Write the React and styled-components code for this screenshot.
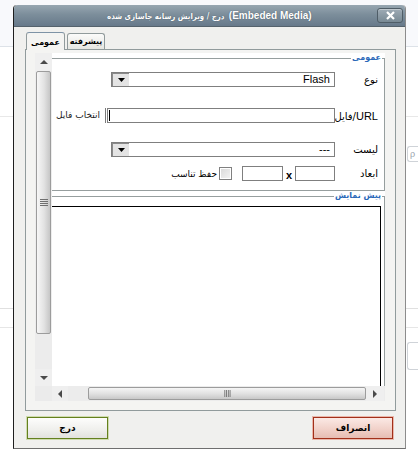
import React from 'react';
import styled, { createGlobalStyle } from 'styled-components';

const GlobalStyle = createGlobalStyle`
  html, body {
    margin: 0;
    padding: 0;
    background: #fff;
  }
  body {
    font-family: "Liberation Sans", "DejaVu Sans", sans-serif;
    font-size: 11px;
    color: #000;
  }
  * { box-sizing: border-box; }
`;

const Page = styled.div`
  position: relative;
  width: 418px;
  height: 459px;
  overflow: hidden;
  background: #fff;
`;

// the page behind the modal, only its edges show
const BackBand = styled.div`
  height: ${p => p.$h}px;
  margin-top: ${p => p.$mt || 0}px;
  display: flex;
  justify-content: flex-end;
  align-items: stretch;
  background: ${p => p.$bg || 'transparent'};
  border-bottom: ${p => (p.$line ? `1px solid ${p.$line}` : 'none')};
`;

const SideStub = styled.div`
  width: 11px;
  border: 1px solid #cfd3d8;
  border-right: none;
  border-radius: 3px 0 0 3px;
  background: #fff;
  color: #9aa3ad;
  font-size: 9px;
  line-height: 14px;
  padding-left: 2px;
  overflow: hidden;
`;

const Dialog = styled.div`
  position: absolute;
  left: 13px;
  top: 5px;
  width: 393px;
  height: 444px;
  display: flex;
  flex-direction: column;
  background: #f0f0ee;
  border-left: 1px solid #1e1e1e;
  border-right: 1px solid #8c8c8c;
  border-bottom: 1px solid #6f6f6f;
  border-radius: 4px 4px 0 0;
`;

const TitleBar = styled.div`
  height: 22px;
  display: grid;
  grid-template-columns: 1fr auto 1fr;
  align-items: start;
  background: linear-gradient(#97a6b1, #7c8e9b 45%, #67798a);
  border-radius: 4px 4px 0 0;
  border-bottom: 1px solid #55626c;
`;

const TitleText = styled.div`
  grid-column: 2;
  direction: ltr;
  display: flex;
  align-items: baseline;
  gap: 4px;
  height: 22px;
  padding-top: 5px;
  color: #fff;
  white-space: nowrap;
  text-shadow: 0 0 1px #3f4d58;
`;

const TitleFa = styled.span`
  font-family: "DejaVu Sans", sans-serif;
  font-size: 8px;
  font-weight: bold;
  letter-spacing: 0;
  transform: scaleX(0.88);
  transform-origin: right center;
  display: inline-block;
  margin-left: -16px;
`;

const TitleEn = styled.span`
  font-family: "Liberation Sans", sans-serif;
  font-size: 10px;
  font-weight: bold;
`;

const CloseButton = styled.div`
  grid-column: 3;
  justify-self: end;
  margin: 3px 2px 0 0;
  width: 26px;
  height: 15px;
  display: flex;
  align-items: center;
  justify-content: center;
  border: 1px solid #4f5d67;
  border-radius: 3px;
  background: linear-gradient(#9eabb5, #788994);
  box-shadow: inset 0 1px 0 rgba(255, 255, 255, 0.35);
`;

const Body = styled.div`
  flex: 1;
  display: flex;
  flex-direction: column;
  padding: 5px 9px 0 11px;
`;

const TabRow = styled.div`
  display: flex;
  gap: 2px;
  height: 17px;
  padding-left: 1px;
`;

const Tab = styled.div`
  position: relative;
  z-index: 1;
  width: ${p => p.$w}px;
  height: ${p => (p.$active ? 18 : 16)}px;
  margin-top: ${p => (p.$active ? 0 : 1)}px;
  border: 1px solid #919b9c;
  border-bottom: none;
  border-top-color: ${p => (p.$active ? '#7e93a6' : '#919b9c')};
  border-radius: 3px 3px 0 0;
  background: ${p => (p.$active ? '#f4f4f2' : 'linear-gradient(#fbfbfa, #e6e6e1)')};
  display: flex;
  align-items: center;
  justify-content: center;
  font-family: "DejaVu Sans", sans-serif;
  font-size: 8px;
  font-weight: bold;
  white-space: nowrap;
  padding-top: ${p => (p.$active ? 2 : 0)}px;
`;

const Panel = styled.div`
  width: 371px;
  height: 362px;
  border: 1px solid #919b9c;
  background: #f4f4f2;
  padding: 3px 0 0 9px;
`;

const ScrollFrame = styled.div`
  display: grid;
  grid-template-columns: 17px 333px;
  grid-template-rows: 333px 15px;
`;

const VScroll = styled.div`
  display: flex;
  flex-direction: column;
  background: #ededed;
`;

const Arrow = styled.div`
  width: ${p => p.$w || 17}px;
  height: ${p => p.$h || 15}px;
  flex: none;
  display: flex;
  align-items: center;
  justify-content: center;
  background: #efefef;
`;

const VThumb = styled.div`
  height: 263px;
  margin: 0 1px;
  flex: none;
  display: flex;
  align-items: center;
  justify-content: center;
  border: 1px solid #9c9c9c;
  border-radius: 2px;
  background: linear-gradient(to right, #f7f7f7, #e2e2e2 55%, #c6c6c6);
`;

const Track = styled.div`
  flex: ${p => (p.$w ? 'none' : 1)};
  width: ${p => (p.$w ? `${p.$w}px` : 'auto')};
  background: #ececec;
`;

const Corner = styled.div`
  background: #ebebeb;
`;

const HScroll = styled.div`
  display: flex;
  background: #ececec;
`;

const HThumb = styled.div`
  flex: 1;
  margin: 1px 0;
  display: flex;
  align-items: center;
  justify-content: center;
  border: 1px solid #9c9c9c;
  border-radius: 2px;
  background: linear-gradient(#f5f5f5, #e0e0e0 55%, #c8c8c8);
`;

const Viewport = styled.div`
  overflow: hidden;
  background: #fff;
  direction: rtl;
`;

const Content = styled.div`
  width: 430px;
`;

const FieldBox = styled.div`
  position: relative;
  margin-top: 5px;
  padding: 0 ${p => p.$pr || 0}px ${p => p.$pb || 0}px 0;
  border: 1px solid #969e9e;
  height: ${p => (p.$h ? `${p.$h}px` : 'auto')};
`;

const Legend = styled.span`
  position: absolute;
  top: -6px;
  right: 2px;
  padding: 0 1px;
  background: #fff;
  font-family: "DejaVu Sans", sans-serif;
  font-size: 8px;
  font-weight: bold;
  line-height: 10px;
  color: #2a68b8;
  white-space: nowrap;
`;

const Row = styled.div`
  display: flex;
  align-items: center;
  height: 15px;
  margin-top: ${p => p.$mt}px;
`;

const Label = styled.div`
  width: 49px;
  flex: none;
  padding-right: 6px;
  font-family: "DejaVu Sans", sans-serif;
  font-size: 10px;
  white-space: nowrap;
`;

const Ltr = styled.span`
  direction: ltr;
  unicode-bidi: isolate;
  display: inline-block;
`;

const LatinPart = styled.span`
  font-family: "Liberation Sans", sans-serif;
  font-size: 11px;
`;

const Select = styled.div`
  width: 224px;
  height: 15px;
  display: flex;
  border: 1px solid #7f7f7f;
  background: #fff;
`;

const SelectValue = styled.div`
  flex: 1;
  padding-right: 4px;
  font-size: 11px;
  line-height: 13px;
  direction: ltr;
  text-align: right;
`;

const DropButton = styled.div`
  width: 17px;
  flex: none;
  display: flex;
  align-items: center;
  justify-content: center;
  border: 1px solid #8a8a8a;
  border-width: 1px 0 0 1px;
  background: #e4e4e4;
`;

const TextInput = styled.div`
  width: ${p => p.$w}px;
  height: 15px;
  flex: none;
  border: 1px solid #7f7f7f;
  background: #fff;
  direction: ltr;
  display: flex;
  align-items: center;
`;

const Caret = styled.span`
  width: 1px;
  height: 11px;
  margin-left: 1px;
  background: #000;
`;

const BrowseButton = styled.div`
  width: 70px;
  height: 15px;
  flex: none;
  margin-right: 1px;
  padding-right: 5px;
  border-right: 1px solid #7a7a7a;
  font-family: "DejaVu Sans", sans-serif;
  font-size: 9px;
  line-height: 15px;
  white-space: nowrap;
  color: #1c1c1c;
`;

const Times = styled.div`
  width: 12px;
  flex: none;
  text-align: center;
  font-size: 11px;
  font-weight: bold;
  padding-top: 2px;
`;

const Checkbox = styled.div`
  width: 13px;
  height: 13px;
  flex: none;
  margin-right: 10px;
  border: 1px solid #808080;
  background: linear-gradient(135deg, #d8d8d8, #f4f4f4);
  box-shadow: inset 0 0 0 1px #fff;
`;

const CheckLabel = styled.div`
  margin-right: 2px;
  font-family: "DejaVu Sans", sans-serif;
  font-size: 9px;
  white-space: nowrap;
`;

const PreviewBox = styled.div`
  margin-top: 9px;
  height: 190px;
  border: 1px solid #000;
  background: #fff;
`;

const ButtonRow = styled.div`
  display: flex;
  justify-content: space-between;
  margin-top: 6px;
  padding: 0 3px 0 2px;
`;

const ActionButton = styled.div`
  width: ${p => p.$w}px;
  height: 22px;
  display: flex;
  align-items: center;
  justify-content: center;
  border: 1px solid ${p => (p.$tone === 'red' ? '#a2301a' : '#64801e')};
  box-shadow: 0 0 0 1px ${p => (p.$tone === 'red' ? '#e9b7ab' : '#cfdcae')};
  background: ${p =>
    p.$tone === 'red'
      ? 'linear-gradient(#fbe9e5, #f0cfc7 60%, #e6bdb3)'
      : 'linear-gradient(#fdfdfc, #efefec 60%, #e2e2dd)'};
  font-family: "DejaVu Sans", sans-serif;
  font-size: 9px;
  font-weight: bold;
  direction: rtl;
`;

const Tri = ({ dir }) => {
  const pts = {
    up: '0,5 4,1 8,5',
    down: '0,1 8,1 4,5',
    left: '5,0 5,8 1,4',
    right: '1,0 1,8 5,4',
  }[dir];
  const vertical = dir === 'up' || dir === 'down';
  return (
    <svg width={vertical ? 8 : 6} height={vertical ? 6 : 8} viewBox={vertical ? '0 0 8 6' : '0 0 6 8'}>
      <polygon points={pts} fill="#4a4a4a" />
    </svg>
  );
};

const Grip = ({ vertical }) => (
  <svg width="8" height={vertical ? 8 : 7} viewBox="0 0 8 8">
    {[0, 1, 2, 3].map(i =>
      vertical ? (
        <rect key={i} x="0" y={i * 2} width="8" height="1" fill="#6f6f6f" />
      ) : (
        <rect key={i} x={i * 2 + 1} y="0" width="1" height="8" fill="#6f6f6f" />
      )
    )}
  </svg>
);

const Select1 = ({ value }) => (
  <Select>
    <SelectValue>{value}</SelectValue>
    <DropButton>
      <svg width="7" height="4" viewBox="0 0 7 4">
        <polygon points="0,0 7,0 3.5,4" fill="#000" />
      </svg>
    </DropButton>
  </Select>
);

export default function App() {
  return (
    <Page>
      <GlobalStyle />
      <BackBand $h={47} $bg="#f8f9fc" $line="#dde2e8" />
      <BackBand $h={70} $line="#e8e8e8" />
      <BackBand $h={16} $mt={29}>
        <SideStub>ρ</SideStub>
      </BackBand>
      <BackBand $h={147} $line="#e0e0e0" />
      <BackBand $h={19} $line="#e6e6e6" />
      <BackBand $h={28} $mt={14}>
        <SideStub />
      </BackBand>

      <Dialog>
        <TitleBar>
          <TitleText>
            <TitleFa dir="rtl">درج / ویرایش رسانه جاسازی شده</TitleFa>
            <TitleEn>(Embeded Media)</TitleEn>
          </TitleText>
          <CloseButton>
            <svg width="9" height="9" viewBox="0 0 9 9">
              <path d="M1 1 L8 8 M8 1 L1 8" stroke="#fff" strokeWidth="2.2" />
            </svg>
          </CloseButton>
        </TitleBar>

        <Body>
          <TabRow>
            <Tab $active $w={39}>عمومی</Tab>
            <Tab $w={38}>پیشرفته</Tab>
          </TabRow>

          <Panel>
            <ScrollFrame>
              <VScroll>
                <Arrow $h={18}><Tri dir="up" /></Arrow>
                <VThumb><Grip vertical /></VThumb>
                <Track />
                <Arrow $h={17}><Tri dir="down" /></Arrow>
              </VScroll>

              <Viewport>
                <Content>
                  <FieldBox $pb={9}>
                    <Legend>عمومی</Legend>
                    <Row $mt={13}>
                      <Label>نوع</Label>
                      <Select1 value="Flash" />
                    </Row>
                    <Row $mt={21}>
                      <Label>
                        <Ltr>فایل/<LatinPart>URL</LatinPart></Ltr>
                      </Label>
                      <TextInput $w={228}><Caret /></TextInput>
                      <BrowseButton>انتخاب فایل</BrowseButton>
                    </Row>
                    <Row $mt={19}>
                      <Label>لیست</Label>
                      <Select1 value="---" />
                    </Row>
                    <Row $mt={9}>
                      <Label>ابعاد</Label>
                      <TextInput $w={40} />
                      <Times>x</Times>
                      <TextInput $w={41} />
                      <Checkbox />
                      <CheckLabel>حفظ تناسب</CheckLabel>
                    </Row>
                  </FieldBox>

                  <FieldBox $pr={3} $h={220}>
                    <Legend>پیش نمایش</Legend>
                    <PreviewBox />
                  </FieldBox>
                </Content>
              </Viewport>

              <Corner />
              <HScroll>
                <Arrow $w={16}><Tri dir="left" /></Arrow>
                <Track $w={20} />
                <HThumb><Grip /></HThumb>
                <Arrow $w={18}><Tri dir="right" /></Arrow>
                <Track $w={1} />
              </HScroll>
            </ScrollFrame>
          </Panel>

          <ButtonRow>
            <ActionButton $w={81} $tone="green">درج</ActionButton>
            <ActionButton $w={80} $tone="red">انصراف</ActionButton>
          </ButtonRow>
        </Body>
      </Dialog>
    </Page>
  );
}
